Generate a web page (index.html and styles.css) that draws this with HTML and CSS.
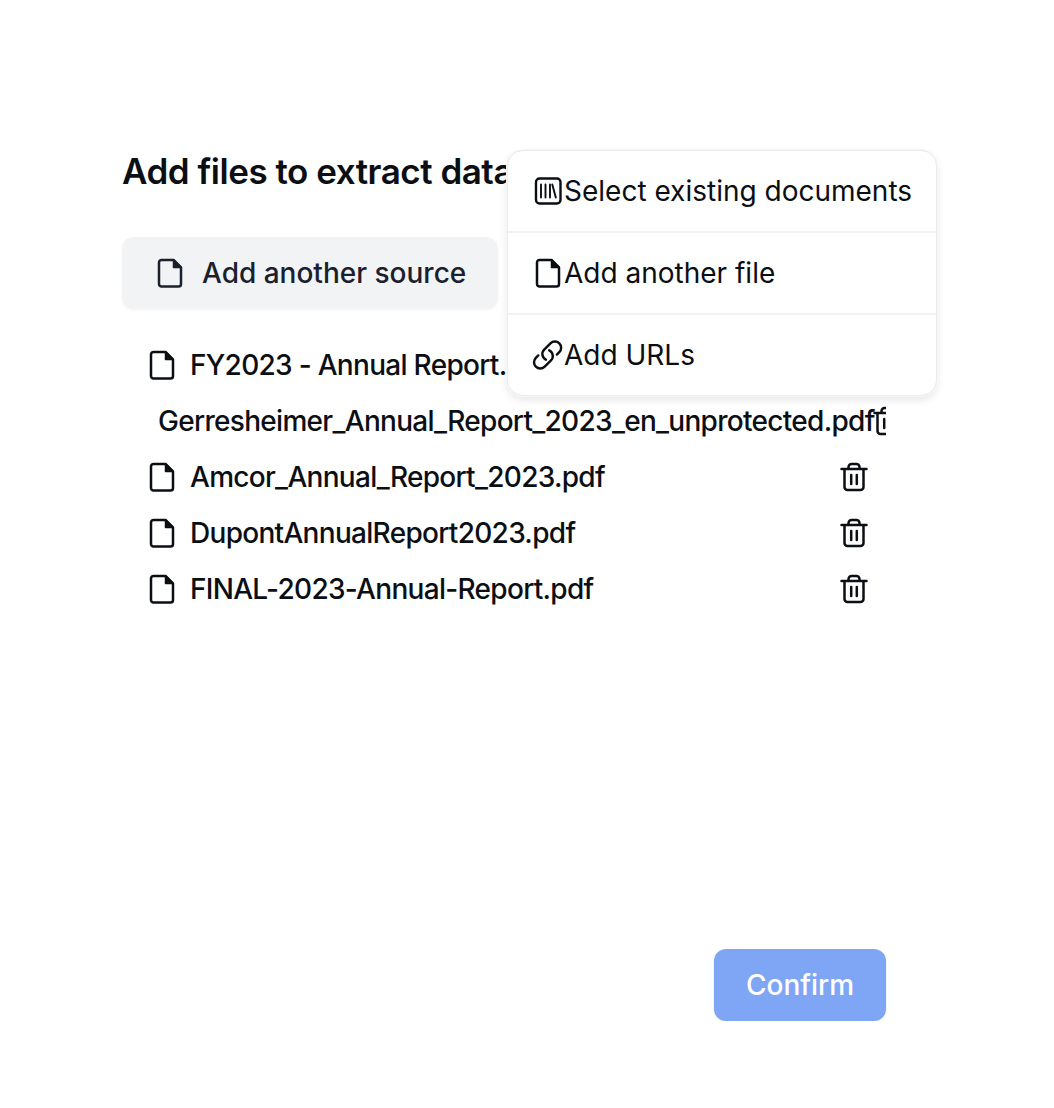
FILE: index.html
```html
<!DOCTYPE html>
<html lang="en">
<head>
    <meta charset="UTF-8">
    <title>Add files</title>
    <link rel="stylesheet" href="styles.css">
</head>
<body>
    <svg class="sprite" xmlns="http://www.w3.org/2000/svg">
        <symbol id="i-file" viewBox="0 0 32 32">
            <path d="M7.500 2.900H19.500L27 10.500V27A2.600 2.600 0 0 1 24.400 29.600H7.600A2.600 2.600 0 0 1 5 27V5.400A2.500 2.500 0 0 1 7.500 2.900Z" fill="none" stroke="currentColor" stroke-width="2.500" stroke-linejoin="round"/>
            <path d="M19.500 2.900V10.500H27Z" fill="currentColor" stroke="currentColor" stroke-width="1.500" stroke-linejoin="round"/>
        </symbol>
        <symbol id="i-trash" viewBox="0 0 32 32">
            <path d="M3.500 8H28.500M6.500 8V26A3 3 0 0 0 9.500 29H22.500A3 3 0 0 0 25.500 26V8M10.500 8V6A3 3 0 0 1 13.500 3H18.500A3 3 0 0 1 21.500 6V8M13.200 14V23M18.800 14V23" fill="none" stroke="currentColor" stroke-width="2.500" stroke-linecap="round" stroke-linejoin="round"/>
        </symbol>
        <symbol id="i-library" viewBox="0 0 32 32">
            <rect x="4" y="3.500" width="24.500" height="25" rx="3.500" fill="none" stroke="currentColor" stroke-width="2.400"/>
            <path d="M9 9.500V22.500M13.500 9.500V22.500M18 9.500V22.500M20.300 9.500L23.800 22.500" fill="none" stroke="currentColor" stroke-width="1.900" stroke-linecap="round"/>
        </symbol>
        <symbol id="i-link" viewBox="0.800 0.500 23 23">
            <path d="M13.190 8.688a4.500 4.500 0 0 1 1.242 7.244l-4.500 4.500a4.500 4.500 0 0 1-6.364-6.364l1.757-1.757m13.350-.622 1.757-1.757a4.500 4.500 0 0 0-6.364-6.364l-4.500 4.500a4.500 4.500 0 0 0 1.242 7.244" fill="none" stroke="currentColor" stroke-width="1.750" stroke-linecap="round" stroke-linejoin="round"/>
        </symbol>
    </svg>

    <div class="container">
        <h1>Add files to extract data from</h1>

        <button class="btn-source">
            <svg class="icon"><use href="#i-file"/></svg>
            <span>Add another source</span>
        </button>

        <!-- Arquivos -->
        <ul class="file-list">
            <li class="file-row">
                <svg class="icon icon-file"><use href="#i-file"/></svg>
                <span class="file-name">FY2023 - Annual Report.pdf</span>
                <svg class="icon icon-trash"><use href="#i-trash"/></svg>
            </li>
            <li class="file-row">
                <svg class="icon icon-file"><use href="#i-file"/></svg>
                <span class="file-name">Gerresheimer_Annual_Report_2023_en_unprotected.pdf</span>
                <svg class="icon icon-trash"><use href="#i-trash"/></svg>
            </li>
            <li class="file-row">
                <svg class="icon icon-file"><use href="#i-file"/></svg>
                <span class="file-name">Amcor_Annual_Report_2023.pdf</span>
                <svg class="icon icon-trash"><use href="#i-trash"/></svg>
            </li>
            <li class="file-row">
                <svg class="icon icon-file"><use href="#i-file"/></svg>
                <span class="file-name">DupontAnnualReport2023.pdf</span>
                <svg class="icon icon-trash"><use href="#i-trash"/></svg>
            </li>
            <li class="file-row">
                <svg class="icon icon-file"><use href="#i-file"/></svg>
                <span class="file-name">FINAL-2023-Annual-Report.pdf</span>
                <svg class="icon icon-trash"><use href="#i-trash"/></svg>
            </li>
        </ul>

        <div class="footer">
            <button class="btn-confirm">Confirm</button>
        </div>

        <!-- Menu -->
        <div class="menu">
            <div class="menu-item">
                <svg class="icon"><use href="#i-library"/></svg>
                <span>Select existing documents</span>
            </div>
            <div class="menu-item">
                <svg class="icon"><use href="#i-file"/></svg>
                <span>Add another file</span>
            </div>
            <div class="menu-item">
                <svg class="icon"><use href="#i-link"/></svg>
                <span>Add URLs</span>
            </div>
        </div>
    </div>
</body>
</html>
```

FILE: styles.css
```css
body {
    font-family: Inter, "Liberation Sans", sans-serif;
    background-color: #fff;
    color: #0b0f14;
    margin: 0;
    padding: 0;
}

.sprite {
    display: none;
}

.container {
    position: relative;
    width: 764px;
    height: 1021px;
    margin-left: 122px;
    padding-top: 149px;
    box-sizing: border-box;
}

h1 {
    font-size: 35px;
    line-height: 44px;
    font-weight: 600;
    letter-spacing: -0.48px;
    margin: 0 0 44px;
    white-space: nowrap;
}

.icon {
    width: 32px;
    height: 32px;
    flex-shrink: 0;
}

.btn-source {
    display: flex;
    align-items: center;
    gap: 16px;
    width: 376px;
    height: 72px;
    padding: 0 32px;
    border: none;
    border-radius: 12px;
    background-color: #f1f3f5;
    box-shadow: 0 1px 3px rgba(0, 0, 0, 0.05);
    color: #1a202c;
    font-family: inherit;
    font-size: 28px;
    font-weight: 500;
    white-space: nowrap;
}

.file-list {
    list-style: none;
    margin: 28px 0 0;
    padding: 0 0 0 24px;
    overflow: hidden;
}

.file-row {
    display: flex;
    align-items: center;
    height: 56px;
    padding-right: 16px;
    font-size: 28px;
    font-weight: 500;
    letter-spacing: -0.7px;
}

.icon-file {
    flex-shrink: 1;
    min-width: 0;
    margin-right: 12px;
}

.file-name {
    flex-shrink: 0;
    margin-right: -4px;
    white-space: nowrap;
}

.icon-trash {
    margin-left: auto;
}

.footer {
    position: absolute;
    right: 0;
    bottom: 0;
}

.btn-confirm {
    display: block;
    width: 172px;
    height: 72px;
    border: none;
    border-radius: 12px;
    background-color: #7fa6f5;
    box-shadow: 0 1px 3px rgba(0, 0, 0, 0.08);
    color: #fff;
    font-family: inherit;
    font-size: 28px;
    font-weight: 500;
}

.menu {
    position: absolute;
    top: 150px;
    left: 385px;
    width: 430px;
    background: #fff;
    border: 1px solid #e9ebee;
    border-radius: 16px;
    box-shadow: 0 0 0 1px #f6f7f8, 0 4px 8px rgba(0, 0, 0, 0.1);
    box-sizing: border-box;
}

.menu-item {
    display: flex;
    align-items: center;
    height: 82px;
    padding: 0 24px;
    font-size: 28px;
    white-space: nowrap;
    border-bottom: 2px solid #f1f2f4;
    box-sizing: border-box;
}

.menu-item:last-child {
    height: 80px;
    border-bottom: none;
}
```
